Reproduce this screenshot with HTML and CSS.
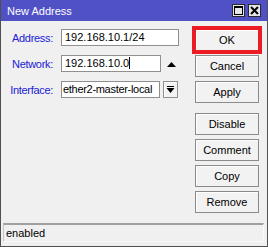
FILE: index.html
```html
<!DOCTYPE html>
<html lang="en">
<head>
  <meta charset="UTF-8" />
  <title>New Address</title>
  <link rel="stylesheet" href="styles.css">
</head>
<body>
  <div class="window">
    <!-- TITLE -->
    <div class="titlebar">
      <span class="title">New Address</span>
      <div class="title-buttons">
        <div class="tbtn">
          <svg width="9" height="9" viewBox="0 0 9 9"><rect x="0.5" y="0.5" width="8" height="8" fill="none" stroke="#000"/><rect x="0" y="0" width="9" height="2" fill="#000"/></svg>
        </div>
        <div class="tbtn">
          <svg width="9" height="9" viewBox="0 0 9 9"><path d="M1 1 L8 8 M8 1 L1 8" stroke="#000" stroke-width="2"/></svg>
        </div>
      </div>
    </div>

    <div class="main">
      <!-- FORM -->
      <div class="form">
        <div class="row">
          <label class="lbl">Address:</label>
          <div class="field wide">192.168.10.1/24</div>
        </div>
        <div class="row">
          <label class="lbl">Network:</label>
          <div class="field">192.168.10.0<span class="caret"></span></div>
          <svg class="up" width="9" height="5" viewBox="0 0 9 5"><path d="M4.5 0 L9 5 L0 5 Z" fill="#000"/></svg>
        </div>
        <div class="row">
          <label class="lbl">Interface:</label>
          <div class="field combo">ether2-master-local</div>
          <div class="drop">
            <svg width="9" height="8" viewBox="0 0 9 8"><rect x="1" y="0" width="7" height="1" fill="#000"/><path d="M0.5 2 L8.5 2 L4.5 7 Z" fill="#000"/></svg>
          </div>
        </div>
      </div>

      <!-- BUTTONS -->
      <div class="buttons">
        <button class="btn ok">OK</button>
        <button class="btn">Cancel</button>
        <button class="btn">Apply</button>
        <button class="btn spaced">Disable</button>
        <button class="btn">Comment</button>
        <button class="btn">Copy</button>
        <button class="btn">Remove</button>
      </div>
    </div>

    <div class="status">enabled</div>
  </div>
</body>
</html>
```

FILE: styles.css
```css
body {
  margin: 0;
  font-family: 'Liberation Sans', Arial, sans-serif;
  font-size: 11px;
  background-color: #f0f0f0;
}

.window {
  width: 268px;
  height: 247px;
  box-sizing: border-box;
  border: 1px solid #505050;
  border-top: none;
  background-color: #f0f0f0;
  display: flex;
  flex-direction: column;
}

.titlebar {
  height: 21px;
  background-color: #5151c6;
  display: flex;
  align-items: center;
  justify-content: space-between;
  padding: 0 6px 0 6px;
}

.title {
  color: #fff;
  font-size: 11px;
}

.title-buttons {
  display: flex;
  gap: 3px;
}

.tbtn {
  width: 13px;
  height: 13px;
  box-sizing: border-box;
  border: 1px solid #2a2a2a;
  background-color: #e6e6e6;
  display: flex;
  align-items: center;
  justify-content: center;
}

.main {
  display: flex;
  padding: 8px 8px 0 0;
}

.form {
  display: flex;
  flex-direction: column;
  gap: 9px;
}

.row {
  display: flex;
  align-items: center;
  height: 17px;
}

.lbl {
  width: 52px;
  text-align: right;
  color: #2020d6;
  margin-right: 8px;
  letter-spacing: -0.3px;
}

.field {
  height: 17px;
  box-sizing: border-box;
  border: 1px solid #8f8f8f;
  background-color: #fff;
  padding: 0 3px;
  line-height: 15px;
  width: 100px;
  white-space: nowrap;
  overflow: hidden;
}

.field.wide { width: 118px; }
.field.combo { width: 99px; padding: 0 1px; letter-spacing: -0.3px; }

.caret {
  display: inline-block;
  width: 1px;
  height: 12px;
  background-color: #000;
  vertical-align: -2px;
}

.up {
  margin-left: 6px;
  margin-top: 2px;
}

.drop {
  width: 15px;
  height: 17px;
  box-sizing: border-box;
  margin-left: 3px;
  border: 1px solid #8f8f8f;
  background-color: #f3f3f3;
  box-shadow: inset 1px 1px 0 #fff;
  display: flex;
  align-items: center;
  justify-content: center;
}

.buttons {
  margin-left: auto;
  display: flex;
  flex-direction: column;
  gap: 4px;
}

.btn {
  width: 64px;
  height: 22px;
  box-sizing: border-box;
  border: 1px solid #8a8a8a;
  background-color: #f2f2f2;
  box-shadow: inset 1px 1px 0 #fff;
  font-family: 'Liberation Sans', Arial, sans-serif;
  font-size: 11px;
  color: #000;
  padding: 0;
}

.btn.spaced { margin-top: 6px; }

.btn.ok {
  outline: 4px solid #ec1c24;
  outline-offset: -1px;
}

.status {
  margin: auto 3px 4px 2px;
  height: 19px;
  box-sizing: border-box;
  border-top: 2px solid #a0a0a0;
  border-left: 1px solid #c4c4c4;
  border-right: 1px solid #fafafa;
  border-bottom: 1px solid #fafafa;
  padding: 0 2px;
  line-height: 16px;
  color: #000;
}
```
